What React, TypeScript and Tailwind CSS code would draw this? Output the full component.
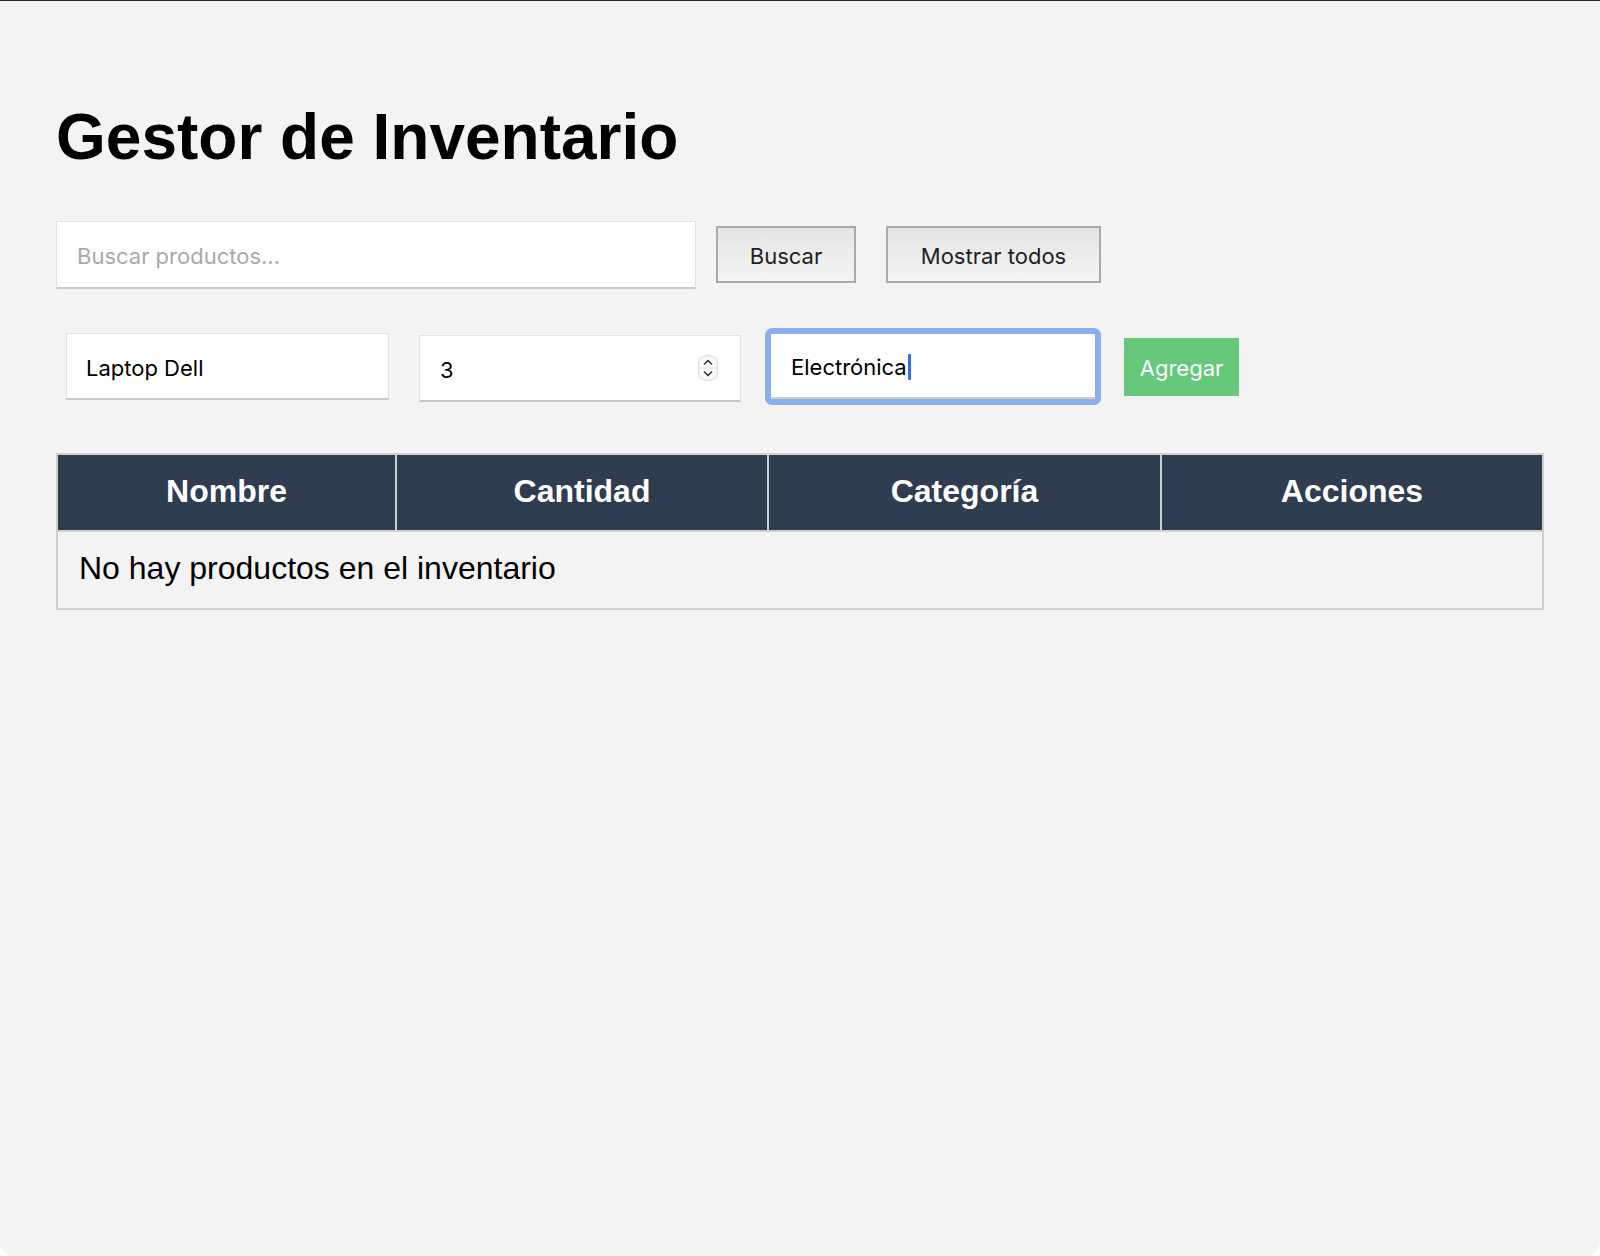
import React from "react";

const ui = { fontFamily: "Inter, 'Noto Sans', sans-serif" };
const helv = { fontFamily: "'Liberation Sans', Arial, sans-serif" };

function Stepper() {
  return (
    <svg width="20" height="26" viewBox="0 0 20 26" className="shrink-0">
      <rect x="0.75" y="0.75" width="18.5" height="24.5" rx="7" fill="#fafafa" stroke="#d4d4d4" strokeWidth="1" />
      <line x1="1" y1="13" x2="19" y2="13" stroke="#dedede" strokeWidth="1" />
      <path d="M6.5 9 L10 5.5 L13.5 9" fill="none" stroke="#333" strokeWidth="1.6" strokeLinecap="round" strokeLinejoin="round" />
      <path d="M6.5 17 L10 20.5 L13.5 17" fill="none" stroke="#333" strokeWidth="1.6" strokeLinecap="round" strokeLinejoin="round" />
    </svg>
  );
}

export default function App() {
  return (
    <div className="bg-white">
      <div
        className="h-[1256px] w-[1600px] bg-[#f3f3f3] border-t border-[#2a2a2a] rounded-b-[14px] px-[56px] pt-[104px] box-border"
        style={helv}
      >
        <h1 className="m-0 text-[64px] leading-[64px] font-bold text-black" style={helv}>
          Gestor de Inventario
        </h1>

        <div className="mt-[52px] flex items-center h-[67px]">
          <input
            readOnly
            placeholder="Buscar productos..."
            className="w-[640px] h-[68px] bg-white border border-[#e3e3e3] border-b-2 border-b-[#c9c9c9] px-5 pt-[4px] text-[22px] text-black placeholder:text-[#a9a9a9] outline-none"
            style={ui}
          />
          <button
            className="ml-[20px] w-[140px] h-[57px] border-2 border-[#a9a9a9] bg-gradient-to-b from-[#e4e4e4] to-[#f5f5f5] pt-[4px] text-[22px] text-[#222]"
            style={ui}
          >
            Buscar
          </button>
          <button
            className="ml-[30px] w-[215px] h-[57px] border-2 border-[#a9a9a9] bg-gradient-to-b from-[#e4e4e4] to-[#f5f5f5] pt-[4px] text-[22px] text-[#222]"
            style={ui}
          >
            Mostrar todos
          </button>
        </div>

        <div className="mt-[40px] flex items-center h-[77px]">
          <input
            readOnly
            value="Laptop Dell"
            className="ml-[10px] w-[323px] h-[67px] bg-white border border-[#e3e3e3] border-b-2 border-b-[#c9c9c9] pl-[19px] pr-5 pt-[4px] text-[22px] text-black outline-none"
            style={ui}
          />
          <div className="ml-[30px] mt-[4px] w-[322px] h-[67px] bg-white border border-[#e3e3e3] border-b-2 border-b-[#c9c9c9] pl-5 pr-[22px] flex items-center justify-between box-border">
            <span className="text-[22px] text-black pt-[4px]" style={ui}>3</span>
            <Stepper />
          </div>
          <div className="ml-[24px] w-[336px] h-[77px] rounded-[7px] border-[6px] border-[#8bafee] bg-white box-border">
            <div className="h-full border-b-2 border-[#cfcfcf] px-[20px] pt-[3px] flex items-center">
              <span className="text-[22px] text-black" style={ui}>Electrónica</span>
              <span className="inline-block w-[3px] h-[26px] bg-[#2f6fe8] rounded-[1px] ml-[1px]" />
            </div>
          </div>
          <button
            className="ml-[23px] w-[115px] h-[58px] bg-[#66c87b] text-white pt-[3px] text-[22px]"
            style={ui}
          >
            Agregar
          </button>
        </div>

        <table className="mt-[48px] w-[1486px] border-collapse border-2 border-[#cfcfcf] table-fixed" style={helv}>
          <colgroup>
            <col className="w-[339px]" />
            <col className="w-[372px]" />
            <col className="w-[393px]" />
            <col className="w-[382px]" />
          </colgroup>
          <thead>
            <tr className="bg-[#2e3d4f] h-[77px]">
              <th className="border-2 border-[#cfcfcf] text-white text-[32px] font-bold text-center pb-[4px]">Nombre</th>
              <th className="border-2 border-[#cfcfcf] text-white text-[32px] font-bold text-center pb-[4px]">Cantidad</th>
              <th className="border-2 border-[#cfcfcf] text-white text-[32px] font-bold text-center pb-[4px]">Categoría</th>
              <th className="border-2 border-[#cfcfcf] text-white text-[32px] font-bold text-center pb-[4px]">Acciones</th>
            </tr>
          </thead>
          <tbody>
            <tr className="h-[78px]">
              <td colSpan={4} className="border-2 border-[#cfcfcf] px-[21px] pb-[4px] text-[32px] text-black">
                No hay productos en el inventario
              </td>
            </tr>
          </tbody>
        </table>
      </div>
    </div>
  );
}
